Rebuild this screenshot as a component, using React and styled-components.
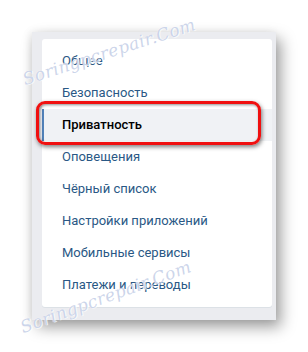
import styled, { createGlobalStyle } from "styled-components";

const GlobalStyle = createGlobalStyle`
  html, body {
    margin: 0;
    padding: 0;
    background: #ffffff;
  }
  body {
    font-family: Roboto, "Open Sans", "Liberation Sans", sans-serif;
  }
`;

const Page = styled.div`
  position: relative;
  width: 308px;
  height: 352px;
  overflow: hidden;
  padding: 32px 0 0 32px;
  box-sizing: border-box;
`;

const Frame = styled.div`
  width: 244px;
  height: 288px;
  box-sizing: border-box;
  padding: 7px 4px 13px 10px;
  background: #ebecf0;
  box-shadow: 5px 7px 14px rgba(0, 0, 0, 0.38), -2px 0 8px rgba(0, 0, 0, 0.08);
`;

const Card = styled.nav`
  background: #ffffff;
  border-radius: 3px;
  padding: 6px 0;
  box-shadow: 0 1px 0 #dce1e6;
`;

const Row = styled.div`
  position: relative;
  height: 32px;
  line-height: 32px;
  font-size: 13px;
  padding-left: ${(p) => (p.$active ? "18px" : "20px")};
  color: ${(p) => (p.$active ? "#000000" : "#2a5885")};
  font-weight: ${(p) => (p.$active ? 500 : 400)};
  background: ${(p) => (p.$active ? "#f0f2f5" : "transparent")};
  border-left: ${(p) => (p.$active ? "2px solid #5181b8" : "none")};
  white-space: nowrap;
`;

const Highlight = styled.span`
  position: absolute;
  left: -8px;
  top: -8px;
  width: 225px;
  height: 44px;
  box-sizing: border-box;
  border: 3px solid #f01010;
  border-radius: 9px;
  box-shadow: 1px 2px 4px rgba(0, 0, 0, 0.5), inset 1px 1px 3px rgba(0, 0, 0, 0.45);
  pointer-events: none;
`;

const Watermark = styled.span`
  position: absolute;
  left: ${(p) => p.$x}px;
  top: ${(p) => p.$y}px;
  transform: rotate(${(p) => p.$angle}deg);
  transform-origin: left bottom;
  font-family: "DejaVu Serif", "Liberation Serif", serif;
  font-style: italic;
  font-size: 17px;
  line-height: 18px;
  letter-spacing: 0.4px;
  color: rgba(170, 185, 220, 0.6);
  text-shadow: 0 0 1px #ffffff, 1px 1px 0 rgba(255, 255, 255, 0.7);
  pointer-events: none;
  white-space: nowrap;
`;

const items = [
  "Общее",
  "Безопасность",
  "Приватность",
  "Оповещения",
  "Чёрный список",
  "Настройки приложений",
  "Мобильные сервисы",
  "Платежи и переводы",
];

export default function App() {
  return (
    <>
      <GlobalStyle />
      <Page>
        <Frame>
          <Card>
            {items.map((item) => {
              const active = item === "Приватность";
              return (
                <Row key={item} $active={active}>
                  {item}
                  {active && <Highlight />}
                </Row>
              );
            })}
          </Card>
        </Frame>
        <Watermark $x={26} $y={70} $angle={-18}>Soringpcrepair.Com</Watermark>
        <Watermark $x={24} $y={318} $angle={-20}>Soringpcrepair.Com</Watermark>
      </Page>
    </>
  );
}
